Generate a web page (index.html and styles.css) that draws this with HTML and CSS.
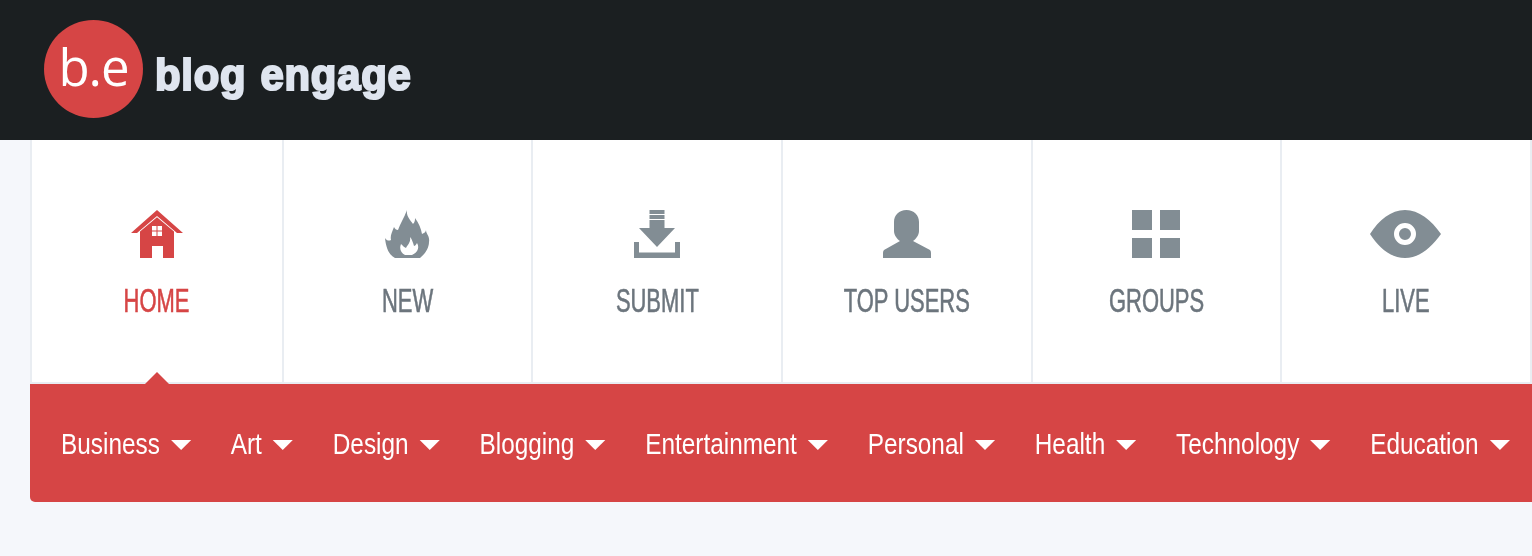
FILE: index.html
```html
<!DOCTYPE html>
<html lang="en">
<head>
  <meta charset="UTF-8" />
  <title>Blog Engage</title>
  <link rel="stylesheet" href="styles.css">
</head>
<body>
  <header class="topbar">
    <a class="logo" href="#">
      <span class="logo-badge">b.e</span>
      <span class="logo-name">blog engage</span>
    </a>
  </header>

  <div class="wrap">
    <nav class="main-nav">
      <a class="nav-item active" href="#">
        <svg class="nav-icon" viewBox="0 0 54 48">
          <path d="M27 0 53 23H47L27 6 7 23H1Z"/>
          <path fill-rule="evenodd" d="M27 7.200 44 21.400V48H33V36H22V48H10V21.400ZM22 16V20.500H26.500V16ZM27.500 16V20.500H32V16ZM22 21.500V26H26.500V21.500ZM27.500 21.500V26H32V21.500Z"/>
        </svg>
        <span class="nav-label">HOME</span>
      </a>
      <a class="nav-item" href="#">
        <svg class="nav-icon" viewBox="0 0 54 48">
          <path fill-rule="evenodd" d="M27 0C26 6 30 10 33 14 35 12 35 10 35 8 39 13 41 19 42 24 44 23 46 22 46 20 46 24 50 26 49 32 49 38 45 44 40 48H15C9 45 6 38 5 28 7 31 9 31 11 30 10 26 12 22 14 17 15 19 16 20 18 20 20 14 24 8 27 0ZM30 27C31 32 28 34 26 38 24 37 23 36 21 34 19 39 21 43 25 45H32C37 43 40 38 37 33 36 35 35 36 34 36 33 33 32 29 30 27Z"/>
        </svg>
        <span class="nav-label">NEW</span>
      </a>
      <a class="nav-item" href="#">
        <svg class="nav-icon" viewBox="0 0 54 48">
          <path d="M19.500 0H34.500V4H19.500ZM19.500 5H34.500V9H19.500ZM19.500 10H34.500V18H45L27 37 9 18H19.500Z"/>
          <path d="M4 32H9V42.500H45V32H50V48H4Z"/>
        </svg>
        <span class="nav-label">SUBMIT</span>
      </a>
      <a class="nav-item" href="#">
        <svg class="nav-icon" viewBox="0 0 54 48">
          <path d="M26.500 0C34 0 39 5 39 12V21C39 25 36 29 33 31L50 40Q51 41 51 43V48H3V43Q3 41 4 40L20 31C17 29 14 25 14 21V12C14 5 19 0 26.500 0Z"/>
        </svg>
        <span class="nav-label">TOP USERS</span>
      </a>
      <a class="nav-item" href="#">
        <svg class="nav-icon" viewBox="0 0 54 48">
          <path d="M3 0H23V20H3ZM31 0H51V20H31ZM3 28H23V48H3ZM31 28H51V48H31Z"/>
        </svg>
        <span class="nav-label">GROUPS</span>
      </a>
      <a class="nav-item" href="#">
        <svg class="nav-icon" viewBox="0 0 72 48">
          <path fill-rule="evenodd" d="M35 0C49 0 61 10 71 24 61 38 49 48 35 48 21 48 9 38 0 24 9 10 21 0 35 0ZM35 13A11 11 0 1 0 35 35 11 11 0 1 0 35 13ZM35 18A6 6 0 1 1 35 30 6 6 0 1 1 35 18Z"/>
        </svg>
        <span class="nav-label">LIVE</span>
      </a>
    </nav>

    <div class="cat-bar">
      <ul class="cat-list">
        <li><a href="#">Business</a></li>
        <li><a href="#">Art</a></li>
        <li><a href="#">Design</a></li>
        <li><a href="#">Blogging</a></li>
        <li><a href="#">Entertainment</a></li>
        <li><a href="#">Personal</a></li>
        <li><a href="#">Health</a></li>
        <li><a href="#">Technology</a></li>
        <li><a href="#">Education</a></li>
      </ul>
    </div>
  </div>
</body>
</html>
```

FILE: styles.css
```css
* { margin: 0; padding: 0; box-sizing: border-box; }

html, body { height: 100%; overflow: hidden; }

body {
  background-color: #f5f7fb;
  font-family: 'Liberation Sans', sans-serif;
}

a { text-decoration: none; }

/* TOP BAR */
.topbar {
  height: 140px;
  background-color: #1b1f21;
  padding: 20px 0 0 44px;
}

.logo {
  display: flex;
  align-items: center;
  gap: 12px;
}

.logo-badge {
  width: 99px;
  height: 98px;
  border-radius: 50%;
  background-color: #d64545;
  color: #fff;
  font-family: 'Open Sans', sans-serif;
  font-size: 51px;
  line-height: 92px;
  text-align: center;
  letter-spacing: -1px;
}

.logo-name {
  margin-top: 11px;
  color: #dfe5ef;
  font-weight: 700;
  font-size: 45px;
  line-height: 50px;
  letter-spacing: 0.8px;
  word-spacing: 2px;
  white-space: nowrap;
  -webkit-text-stroke: 2.2px #dfe5ef;
  transform: scaleX(0.93);
  transform-origin: left;
  filter: blur(0.5px);
}

/* MAIN NAV */
.wrap {
  width: 1502px;
  margin-left: 30px;
}

.main-nav {
  display: flex;
  height: 244px;
  background-color: #fff;
  border-left: 2px solid #e9edf2;
  border-bottom: 2px solid #e9edf2;
}

.nav-item {
  width: 249.7px;
  display: flex;
  flex-direction: column;
  align-items: center;
  padding-top: 70px;
  border-right: 2px solid #e9edf2;
  color: #6c757d;
}

.nav-item:first-child { width: 251.5px; }

.nav-icon {
  height: 48px;
  fill: #828d94;
}

.nav-label {
  margin-top: 24px;
  font-size: 33px;
  line-height: 38px;
  white-space: nowrap;
  -webkit-text-stroke: 0.6px currentColor;
  transform: scaleX(0.665);
}

.nav-item.active { position: relative; color: #d64545; }
.nav-item.active .nav-icon { fill: #d64545; }

.nav-item.active::after {
  content: '';
  position: absolute;
  left: 50%;
  bottom: -2px;
  margin-left: -12px;
  border-left: 12px solid transparent;
  border-right: 12px solid transparent;
  border-bottom: 12px solid #d64545;
}

/* CATEGORIES */
.cat-bar {
  height: 118px;
  padding: 3px 0 0 31px;
  background-color: #d64545;
  border-radius: 0 0 0 5px;
  display: flex;
  align-items: center;
}

/* no narrow font here, so the whole row gets squeezed */
.cat-list {
  display: flex;
  align-items: center;
  gap: 47.4px;
  list-style: none;
  transform: scaleX(0.84);
  transform-origin: left;
}

.cat-list a {
  display: flex;
  align-items: center;
  gap: 13px;
  color: #fff;
  font-size: 29px;
  white-space: nowrap;
}

.cat-list a::after {
  content: '';
  border-left: 12px solid transparent;
  border-right: 12px solid transparent;
  border-top: 10px solid #fff;
}
```
